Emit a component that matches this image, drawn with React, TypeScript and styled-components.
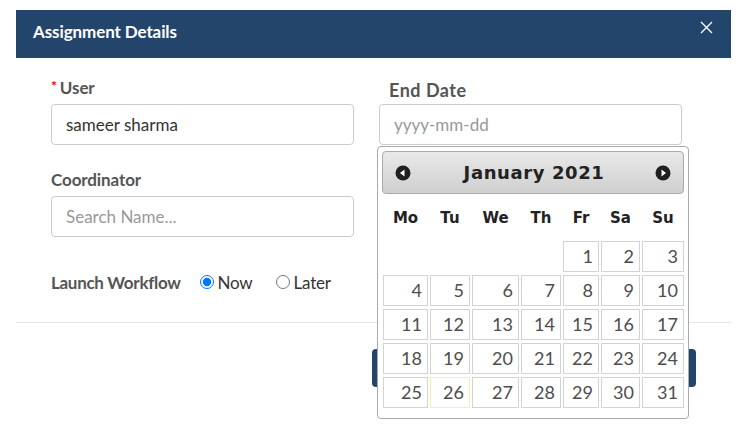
import React from "react";
import styled, { createGlobalStyle } from "styled-components";

const GlobalStyle = createGlobalStyle`
  html, body {
    margin: 0;
    padding: 0;
    background: #fff;
    font-family: Lato, "Open Sans", Arial, sans-serif;
  }
`;

const Page = styled.div`
  min-height: 100vh;
  box-sizing: border-box;
  padding: 10px 11px 0 16px;
`;

const Modal = styled.div`
  width: 715px;
  background: #fff;
`;

const Header = styled.div`
  height: 48px;
  background: #24456b;
  color: #fff;
  display: flex;
  align-items: center;
  justify-content: space-between;
  padding: 0 18px 0 17px;
  box-sizing: border-box;
`;

const Title = styled.h4`
  margin: 0 0 6px 0;
  font-size: 17px;
  font-weight: 700;
  letter-spacing: -0.1px;
`;

const Close = styled.button`
  border: 0;
  background: transparent;
  padding: 0;
  margin-top: -14px;
  display: flex;
  cursor: pointer;
`;

const Body = styled.div`
  display: grid;
  grid-template-columns: 303px 303px;
  column-gap: 25px;
  padding: 20px 49px 30px 35px;
  border-bottom: 1px solid #e5e5e5;
`;

const Column = styled.div`
  display: flex;
  flex-direction: column;
`;

const Field = styled.div<{ $spaced?: boolean }>`
  position: relative;
  margin-bottom: ${(p) => (p.$spaced ? "25px" : "0")};
`;

const Label = styled.label<{ $wide?: boolean }>`
  display: block;
  font-size: ${(p) => (p.$wide ? "18px" : "17px")};
  line-height: 20px;
  height: 20px;
  font-weight: 700;
  color: #555;
  margin: ${(p) => (p.$wide ? "2px 0 4px 10px" : "0 0 6px 0")};
  letter-spacing: ${(p) => (p.$wide ? "0.5px" : "-0.1px")};
`;

const Required = styled.span`
  color: #e00;
  font-size: 14px;
  line-height: 0;
  margin-right: 3px;
  position: relative;
  top: -3px;
`;

const Input = styled.input`
  box-sizing: border-box;
  width: 100%;
  height: 41px;
  border: 1px solid #ccc;
  border-radius: 4px;
  padding: 0 14px;
  font-family: Lato, "Open Sans", Arial, sans-serif;
  font-size: 17px;
  color: #333;
  outline: none;
  &::placeholder {
    color: #999;
  }
`;

const RadioRow = styled.div`
  display: flex;
  align-items: center;
  margin-top: 35px;
  height: 20px;
`;

const RadioLabel = styled.label<{ $gap: number }>`
  display: flex;
  align-items: center;
  font-size: 17px;
  color: #333;
  margin-left: ${(p) => p.$gap}px;
  gap: 4px;
  letter-spacing: -0.2px;
  input {
    width: 14px;
    height: 14px;
    margin: 0;
    accent-color: #0075ff;
  }
`;

const InlineLabel = styled.span`
  font-size: 17px;
  font-weight: 700;
  color: #555;
  letter-spacing: -0.3px;
`;

const Footer = styled.div`
  display: flex;
  justify-content: flex-end;
  gap: 14px;
  padding: 26px 35px 22px 0;
`;

const Button = styled.button`
  width: 155px;
  height: 38px;
  border: 0;
  border-radius: 4px;
  background: #24456b;
`;

/* datepicker popup */
const Picker = styled.div`
  position: absolute;
  top: 68px;
  left: -2px;
  width: 312px;
  box-sizing: border-box;
  padding: 4px 4px 7px 4px;
  background: #fff;
  border: 1px solid #aaa;
  border-radius: 4px;
  z-index: 5;
`;

const PickerHead = styled.div`
  height: 43px;
  box-sizing: border-box;
  border: 1px solid #aaa;
  border-radius: 4px;
  background: linear-gradient(#e9e9e9, #cfcfcf);
  display: flex;
  align-items: center;
  justify-content: space-between;
  padding: 0 12px 0 12px;
`;

const Month = styled.span`
  font-family: "DejaVu Sans", Verdana, sans-serif;
  font-weight: 700;
  font-size: 18px;
  color: #222;
  letter-spacing: 0.6px;
  padding-left: 2px;
`;

const Table = styled.table`
  width: 305px;
  table-layout: fixed;
  border-collapse: separate;
  border-spacing: 2px 3px;
  margin: 1px 0 0 -1px;
`;

const DayName = styled.th<{ $w: number }>`
  width: ${(p) => p.$w}px;
  font-family: "DejaVu Sans", Verdana, sans-serif;
  font-weight: 700;
  font-size: 15px;
  color: #222;
  height: 40px;
  padding: 0;
  text-align: center;
`;

const Cell = styled.td`
  padding: 0;
`;

const Day = styled.a<{ $today?: boolean }>`
  display: block;
  height: 31px;
  box-sizing: border-box;
  border: 1px solid ${(p) => (p.$today ? "#fcefa1" : "#d3d3d3")};
  background: #fff;
  text-align: right;
  padding-right: 5px;
  font-family: Lato, Arial, sans-serif;
  font-size: 18px;
  line-height: 29px;
  color: #4d4d4d;
`;

const NavIcon = ({ dir }: { dir: "prev" | "next" }) => (
  <svg width="16" height="16" viewBox="0 0 16 16">
    <circle cx="8" cy="8" r="7.5" fill="#1f1f1f" />
    {dir === "prev" ? (
      <polygon points="9.5,4.5 9.5,11.5 5,8" fill="#fff" />
    ) : (
      <polygon points="6.5,4.5 6.5,11.5 11,8" fill="#fff" />
    )}
  </svg>
);

const dayNames: [string, number][] = [
  ["Mo", 45],
  ["Tu", 40],
  ["We", 47],
  ["Th", 40],
  ["Fr", 36],
  ["Sa", 39],
  ["Su", 42],
];

const weeks: (number | null)[][] = [
  [null, null, null, null, 1, 2, 3],
  [4, 5, 6, 7, 8, 9, 10],
  [11, 12, 13, 14, 15, 16, 17],
  [18, 19, 20, 21, 22, 23, 24],
  [25, 26, 27, 28, 29, 30, 31],
];

function DatePicker() {
  return (
    <Picker>
      <PickerHead>
        <NavIcon dir="prev" />
        <Month>January 2021</Month>
        <NavIcon dir="next" />
      </PickerHead>
      <Table>
        <thead>
          <tr>
            {dayNames.map(([d, w]) => (
              <DayName key={d} $w={w}>
                {d}
              </DayName>
            ))}
          </tr>
        </thead>
        <tbody>
          {weeks.map((w, i) => (
            <tr key={i}>
              {w.map((d, j) => (
                <Cell key={j}>{d && <Day $today={d === 26}>{d}</Day>}</Cell>
              ))}
            </tr>
          ))}
        </tbody>
      </Table>
    </Picker>
  );
}

export default function App() {
  return (
    <Page>
      <GlobalStyle />
      <Modal>
        <Header>
          <Title>Assignment Details</Title>
          <Close aria-label="close">
            <svg width="13" height="13" viewBox="0 0 13 13">
              <path d="M1 1L12 12M12 1L1 12" stroke="#fff" strokeWidth="1.4" />
            </svg>
          </Close>
        </Header>
        <Body>
          <Column>
            <Field $spaced>
              <Label>
                <Required>*</Required>User
              </Label>
              <Input defaultValue="sameer sharma" />
            </Field>
            <Field>
              <Label>Coordinator</Label>
              <Input placeholder="Search Name..." />
            </Field>
            <RadioRow>
              <InlineLabel>Launch Workflow</InlineLabel>
              <RadioLabel $gap={19}>
                <input type="radio" name="launch" defaultChecked />
                Now
              </RadioLabel>
              <RadioLabel $gap={23}>
                <input type="radio" name="launch" />
                Later
              </RadioLabel>
            </RadioRow>
          </Column>
          <Column>
            <Field>
              <Label $wide>End Date</Label>
              <Input placeholder="yyyy-mm-dd" />
              <DatePicker />
            </Field>
          </Column>
        </Body>
        <Footer>
          <Button aria-label="cancel" />
          <Button aria-label="assign" />
        </Footer>
      </Modal>
    </Page>
  );
}
